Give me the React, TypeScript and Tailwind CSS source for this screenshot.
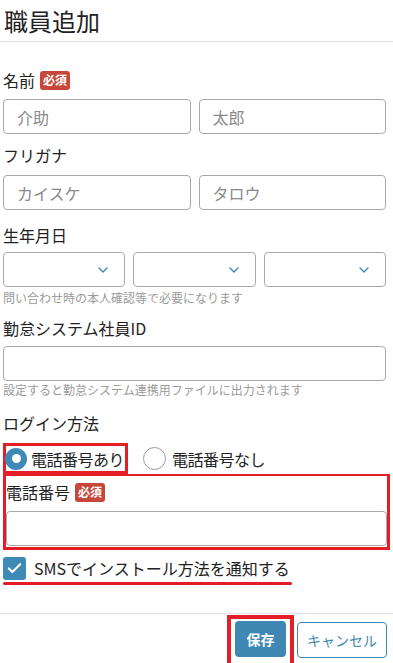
import { ChevronDown, Check } from "lucide-react";

const font = { fontFamily: '"Noto Sans CJK JP", "Noto Sans", sans-serif' };

function Required() {
  return (
    <span className="ml-[5px] inline-flex h-[19px] items-center rounded-[3px] bg-[#c7483b] px-[3px] text-[12px] font-bold leading-none text-white">
      必須
    </span>
  );
}

function Label({ children, required }: { children: React.ReactNode; required?: boolean }) {
  return (
    <div className="flex h-[24px] items-center text-[16px] leading-[24px] text-[#222]">
      <span>{children}</span>
      {required && <Required />}
    </div>
  );
}

function TextBox({ placeholder }: { placeholder?: string }) {
  return (
    <div className="flex h-[35px] flex-1 items-center rounded-[4px] border border-[#a9a9a9] bg-white pl-[13px] text-[16px] text-[#8a8a8a]">
      {placeholder}
    </div>
  );
}

function SelectBox() {
  return (
    <div className="flex h-[35px] flex-1 items-center justify-end rounded-[4px] border border-[#a9a9a9] bg-white pr-[13px]">
      <ChevronDown className="h-[16px] w-[16px] text-[#3d8ab6]" strokeWidth={2} />
    </div>
  );
}

export default function App() {
  return (
    <div className="h-[663px] w-[393px] overflow-hidden bg-white" style={font}>
      <div className="flex h-[42px] items-center border-b border-[#e2e2e2] px-[4px] text-[24px] text-[#222]">
        職員追加
      </div>

      <div className="px-[3px]">
        <div className="mt-[26px]">
          <Label required>名前</Label>
        </div>
        <div className="mt-[7px] flex gap-[8px] pr-[4px]">
          <TextBox placeholder="介助" />
          <TextBox placeholder="太郎" />
        </div>

        <div className="mt-[9px]">
          <Label>フリガナ</Label>
        </div>
        <div className="mt-[8px] flex gap-[8px] pr-[4px]">
          <TextBox placeholder="カイスケ" />
          <TextBox placeholder="タロウ" />
        </div>

        <div className="mt-[13px]">
          <Label>生年月日</Label>
        </div>
        <div className="mt-[5px] flex gap-[8px] pr-[4px]">
          <SelectBox />
          <SelectBox />
          <SelectBox />
        </div>
        <div className="mt-[3px] text-[12px] leading-[16px] text-[#9a9a9a]">
          問い合わせ時の本人確認等で必要になります
        </div>

        <div className="mt-[10px]">
          <Label>勤怠システム社員ID</Label>
        </div>
        <div className="mt-[6px] flex pr-[4px]">
          <TextBox />
        </div>
        <div className="mt-[1px] text-[12px] leading-[16px] text-[#9a9a9a]">
          設定すると勤怠システム連携用ファイルに出力されます
        </div>

        <div className="mt-[13px]">
          <Label>ログイン方法</Label>
        </div>

        <div className="mt-[8px] flex items-center">
          <div className="flex h-[31px] w-[125px] items-center gap-[4px] border-[3px] border-[#e41e26]">
            <span className="-ml-[1px] flex h-[22px] w-[22px] items-center justify-center rounded-full bg-[#3d8ab6]">
              <span className="h-[9px] w-[9px] rounded-full bg-white" />
            </span>
            <span className="text-[16px] tracking-[-0.5px] text-[#222]">電話番号あり</span>
          </div>
          <div className="ml-[15px] flex items-center gap-[6px]">
            <span className="h-[23px] w-[23px] rounded-full border border-[#9a9a9a] bg-white" />
            <span className="text-[16px] tracking-[-0.5px] text-[#222]">電話番号なし</span>
          </div>
        </div>

        <div className="border-[3px] border-t-[2px] border-[#e41e26] pb-[1px]">
          <div className="mt-[4px]">
            <Label required>電話番号</Label>
          </div>
          <div className="mt-[7px] flex">
            <TextBox />
          </div>
        </div>

        <div className="mt-[6px] flex items-center gap-[8px]">
          <span className="flex h-[23px] w-[23px] items-center justify-center rounded-[3px] bg-[#3d8ab6]">
            <Check className="h-[17px] w-[17px] text-white" strokeWidth={3} />
          </span>
          <span className="text-[16px] text-[#222]">SMSでインストール方法を通知する</span>
        </div>
        <div className="mt-[2px] h-[3px] w-[289px] rounded-full bg-[#e41e26]" />
      </div>

      <div className="mt-[28px] flex justify-end gap-[3px] border-t border-[#e2e2e2] pr-[6px] pt-[1px]">
        <div className="border-[4px] border-[#e41e26] px-[4px] pt-[2px] pb-[10px]">
          <div className="flex h-[36px] w-[51px] items-center justify-center rounded-[4px] bg-[#3f88b4] text-[14px] font-bold text-white">
            保存
          </div>
        </div>
        <div className="mt-[7px] flex h-[36px] w-[90px] items-center justify-center rounded-[4px] border border-[#3f88b4] bg-white text-[14px] text-[#3f88b4]">
          キャンセル
        </div>
      </div>
    </div>
  );
}
